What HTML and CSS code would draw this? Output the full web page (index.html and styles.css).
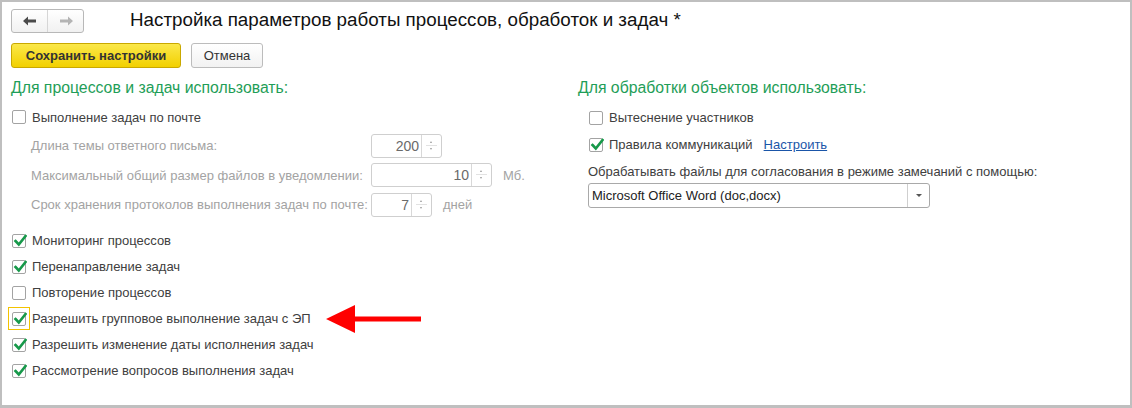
FILE: index.html
```html
<!DOCTYPE html>
<html lang="ru">
<head>
    <meta charset="UTF-8">
    <title>Настройка параметров работы процессов, обработок и задач</title>
    <link rel="stylesheet" href="styles.css">
</head>
<body>
<div class="frame">
    <div class="topbar">
        <div class="nav">
            <div class="nav-btn">
                <svg width="14" height="10" viewBox="0 0 14 10"><path d="M0 5 L5 0.5 V3.5 H13 V6.5 H5 V9.5 Z" fill="#4a4a4a"/></svg>
            </div>
            <div class="nav-btn">
                <svg width="14" height="10" viewBox="0 0 14 10"><path d="M14 5 L9 0.5 V3.5 H1 V6.5 H9 V9.5 Z" fill="#b4b4b4"/></svg>
            </div>
        </div>
        <div class="title">Настройка параметров работы процессов, обработок и задач *</div>
    </div>

    <div class="actions">
        <button class="btn btn-save">Сохранить настройки</button>
        <button class="btn btn-cancel">Отмена</button>
    </div>

    <div class="columns">
        <div class="col-left">
            <div class="group-title">Для процессов и задач использовать:</div>

            <div class="check-row first">
                <span class="box"></span>
                <span>Выполнение задач по почте</span>
            </div>

            <div class="sub-rows">
                <div class="sub-row">
                    <span class="sub-label">Длина темы ответного письма:</span>
                    <div class="spin w70"><span class="val">200</span><span class="spin-btn"><i class="up"></i><i class="mid"></i><i class="down"></i></span></div>
                </div>
                <div class="sub-row">
                    <span class="sub-label">Максимальный общий размер файлов в уведомлении:</span>
                    <div class="spin w120"><span class="val">10</span><span class="spin-btn"><i class="up"></i><i class="mid"></i><i class="down"></i></span></div>
                    <span class="unit">Мб.</span>
                </div>
                <div class="sub-row">
                    <span class="sub-label">Срок хранения протоколов выполнения задач по почте:</span>
                    <div class="spin w60"><span class="val">7</span><span class="spin-btn"><i class="up"></i><i class="mid"></i><i class="down"></i></span></div>
                    <span class="unit">дней</span>
                </div>
            </div>

            <div class="check-list">
                <div class="check-row">
                    <span class="box checked"><svg viewBox="0 0 14 14"><path d="M2.5 7 L5.8 10.5 L12.5 2" /></svg></span>
                    <span>Мониторинг процессов</span>
                </div>
                <div class="check-row">
                    <span class="box checked"><svg viewBox="0 0 14 14"><path d="M2.5 7 L5.8 10.5 L12.5 2" /></svg></span>
                    <span>Перенаправление задач</span>
                </div>
                <div class="check-row">
                    <span class="box"></span>
                    <span>Повторение процессов</span>
                </div>
                <div class="check-row">
                    <span class="focus"><span class="box checked"><svg viewBox="0 0 14 14"><path d="M2.5 7 L5.8 10.5 L12.5 2" /></svg></span></span>
                    <span>Разрешить групповое выполнение задач с ЭП</span>
                    <svg class="pointer" width="96" height="30" viewBox="0 0 96 30"><path d="M0 15 L29 1 L29 12.5 L95 12.5 L95 17.5 L29 17.5 L29 29 Z" fill="#ff0000"/></svg>
                </div>
                <div class="check-row">
                    <span class="box checked"><svg viewBox="0 0 14 14"><path d="M2.5 7 L5.8 10.5 L12.5 2" /></svg></span>
                    <span>Разрешить изменение даты исполнения задач</span>
                </div>
                <div class="check-row">
                    <span class="box checked"><svg viewBox="0 0 14 14"><path d="M2.5 7 L5.8 10.5 L12.5 2" /></svg></span>
                    <span>Рассмотрение вопросов выполнения задач</span>
                </div>
            </div>
        </div>

        <div class="col-right">
            <div class="group-title">Для обработки объектов использовать:</div>
            <div class="indent">
                <div class="check-row r">
                    <span class="box"></span>
                    <span>Вытеснение участников</span>
                </div>
                <div class="check-row r">
                    <span class="box checked"><svg viewBox="0 0 14 14"><path d="M2.5 7 L5.8 10.5 L12.5 2" /></svg></span>
                    <span>Правила коммуникаций</span>
                    <a class="link" href="#">Настроить</a>
                </div>
                <div class="field-label">Обрабатывать файлы для согласования в режиме замечаний с помощью:</div>
                <div class="select">
                    <span class="select-val">Microsoft Office Word (doc,docx)</span>
                    <span class="select-btn"><i></i></span>
                </div>
            </div>
        </div>
    </div>
</div>
</body>
</html>
```

FILE: styles.css
```css
body {
    margin: 0;
    font-family: "Liberation Sans", Arial, sans-serif;
    font-size: 13px;
    color: #404040;
    background-color: #fff;
}
.frame {
    width: 1132px;
    height: 408px;
    box-sizing: border-box;
    border: 2px solid #bfbfbf;
    border-bottom-width: 3px;
    padding: 7px 0 0 9px;
}
.topbar {
    display: flex;
    align-items: center;
    height: 24px;
}
.nav {
    display: flex;
    width: 73px;
    height: 24px;
    box-sizing: border-box;
    border: 1px solid #b8b8b8;
    border-radius: 3px;
    background: linear-gradient(#ffffff, #f1f1f1);
}
.nav-btn {
    flex: 1;
    display: flex;
    align-items: center;
    justify-content: center;
}
.nav-btn:first-child {
    border-right: 1px solid #d6d6d6;
}
.title {
    margin-left: 46px;
    font-size: 18.8px;
    color: #111;
    position: relative;
    top: -1px;
}
.actions {
    display: flex;
    margin-top: 10px;
}
.btn {
    height: 25px;
    box-sizing: border-box;
    border-radius: 3px;
    font-family: "Liberation Sans", Arial, sans-serif;
    font-size: 13px;
    padding: 0;
    color: #333;
}
.btn-save {
    width: 170px;
    font-weight: bold;
    border: 1px solid #c9a800;
    background: linear-gradient(#fbe84a, #f2d000);
}
.btn-cancel {
    width: 72px;
    margin-left: 10px;
    border: 1px solid #bcbcbc;
    background: linear-gradient(#ffffff, #f2f2f2);
}
.columns {
    display: flex;
    margin-top: 11px;
}
.col-left {
    width: 567px;
}
.group-title {
    font-size: 15.8px;
    line-height: 18px;
    color: #1f9e58;
}
.check-row {
    display: flex;
    align-items: center;
    height: 26px;
}
.check-row.first {
    height: 20px;
    margin-top: 10px;
}
.box {
    width: 14px;
    height: 14px;
    box-sizing: border-box;
    border: 1px solid #a3a3a3;
    border-radius: 2px;
    background: #fff;
    margin: 0 6px 0 1px;
    position: relative;
    flex-shrink: 0;
}
.box svg {
    position: absolute;
    left: 0;
    top: -1px;
    width: 14px;
    height: 14px;
}
.box svg path {
    fill: none;
    stroke: #17994a;
    stroke-width: 2.6;
    stroke-linecap: square;
}
.focus {
    display: flex;
    align-items: center;
    justify-content: center;
    width: 22px;
    height: 23px;
    box-sizing: border-box;
    border: 1px solid #f3c300;
    margin: 0 2px 0 -3px;
}
.focus .box {
    margin: 0;
}
.pointer {
    margin-left: 15px;
}
.sub-rows {
    margin-top: 4px;
}
.sub-row {
    display: flex;
    align-items: center;
    height: 29.5px;
    color: #a3a3a3;
}
.sub-label {
    width: 340px;
    margin-left: 20px;
}
.spin {
    display: flex;
    height: 24px;
    box-sizing: border-box;
    border: 1px solid #cfcfcf;
    border-radius: 3px;
    color: #6a6a6a;
    font-size: 14px;
}
.w70 { width: 71px; }
.w120 { width: 121px; }
.w60 { width: 61px; }
.val {
    flex: 1;
    text-align: right;
    line-height: 22px;
    padding-right: 2px;
}
.spin-btn {
    width: 19px;
    border-left: 1px solid #d8d8d8;
    position: relative;
}
.spin-btn i {
    position: absolute;
    left: 8px;
}
.spin-btn .up {
    top: 6px;
    border-left: 1.5px solid transparent;
    border-right: 1.5px solid transparent;
    border-bottom: 2px solid #999;
}
.spin-btn .down {
    top: 13px;
    border-left: 1.5px solid transparent;
    border-right: 1.5px solid transparent;
    border-top: 2px solid #999;
}
.spin-btn .mid {
    top: 10px;
    left: 4px;
    width: 11px;
    border-top: 1px solid #e2e2e2;
}
.unit {
    margin-left: 11px;
}
.check-list {
    margin-top: 8px;
}
.col-right {
    flex: 1;
}
.indent {
    padding-left: 10px;
}
.check-row.r {
    height: 27px;
}
.check-row.r:first-child {
    margin-top: 7px;
}
.link {
    margin-left: 11px;
    color: #1a55a8;
}
.field-label {
    margin-top: 6px;
    line-height: 16px;
}
.select {
    display: flex;
    width: 342px;
    height: 25px;
    box-sizing: border-box;
    border: 1px solid #a9a9a9;
    border-radius: 3px;
    margin-top: 3px;
    color: #222;
}
.select-val {
    flex: 1;
    line-height: 23px;
    padding-left: 3px;
}
.select-btn {
    width: 21px;
    border-left: 1px solid #cfcfcf;
    display: flex;
    align-items: center;
    justify-content: center;
}
.select-btn i {
    border-left: 3px solid transparent;
    border-right: 3px solid transparent;
    border-top: 3px solid #555;
}
```
